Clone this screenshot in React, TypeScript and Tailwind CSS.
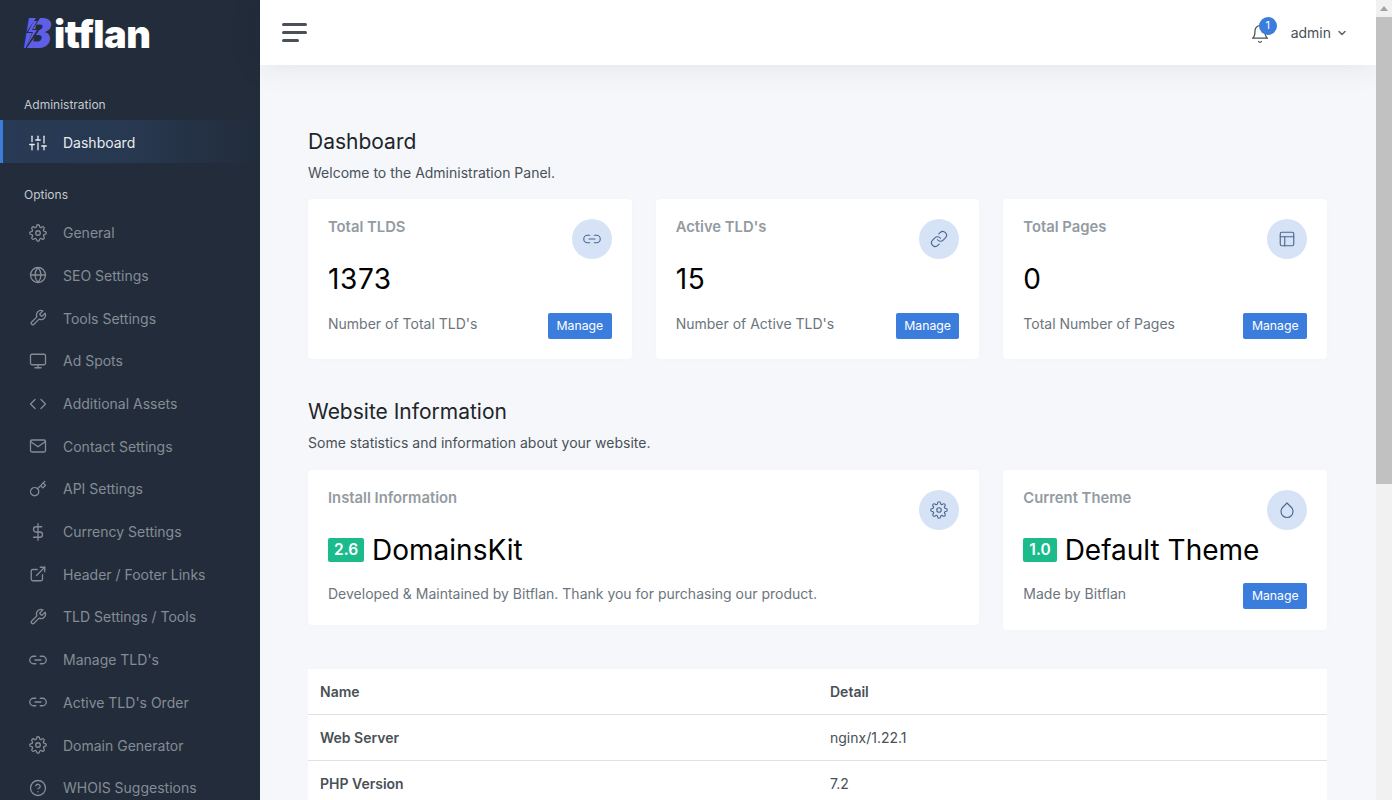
import {
  FiBell,
  FiChevronDown,
  FiCode,
  FiDollarSign,
  FiDroplet,
  FiExternalLink,
  FiGlobe,
  FiHelpCircle,
  FiKey,
  FiLayout,
  FiLink,
  FiLink2,
  FiMail,
  FiMonitor,
  FiSettings,
  FiSliders,
  FiTool,
} from "react-icons/fi";
import type { IconType } from "react-icons";
import type { ReactNode } from "react";

const options: { label: string; icon: IconType }[] = [
  { label: "General", icon: FiSettings },
  { label: "SEO Settings", icon: FiGlobe },
  { label: "Tools Settings", icon: FiTool },
  { label: "Ad Spots", icon: FiMonitor },
  { label: "Additional Assets", icon: FiCode },
  { label: "Contact Settings", icon: FiMail },
  { label: "API Settings", icon: FiKey },
  { label: "Currency Settings", icon: FiDollarSign },
  { label: "Header / Footer Links", icon: FiExternalLink },
  { label: "TLD Settings / Tools", icon: FiTool },
  { label: "Manage TLD's", icon: FiLink2 },
  { label: "Active TLD's Order", icon: FiLink2 },
  { label: "Domain Generator", icon: FiSettings },
  { label: "WHOIS Suggestions", icon: FiHelpCircle },
];

const rows = [
  ["Web Server", "nginx/1.22.1"],
  ["PHP Version", "7.2"],
];

function Sidebar() {
  return (
    <aside className="w-[260px] shrink-0 overflow-hidden bg-[#222c3b]">
      <div className="flex h-[69px] items-baseline pl-[24px] pt-[7px] text-[38px] leading-[52px] font-black tracking-[-0.5px] text-white">
        <span className="relative mr-[3px] text-[41px] italic text-[#5f5ee6]">
          B
          <svg viewBox="0 0 20 34" className="absolute left-[-1px] top-[11px] h-[34px] w-[20px]">
            <path d="M13 0 L3 15 L9 15 L1 34 L17 11 L10 11 L17 0 Z" fill="#222c3b" />
            <path d="M11 3 L5 14 L10 14 L3 29 L14 12 L9 12 L14 3 Z" fill="#5f5ee6" />
          </svg>
        </span>
        <span>itflan</span>
      </div>
      <div className="pl-[24px] pt-[27px] pb-[6px] text-[12px] leading-[18px] text-[#c3c9d0]">
        Administration
      </div>
      <div className="flex h-[43px] items-center gap-[16px] border-l-[3px] border-[#3b7ddd] bg-gradient-to-r from-[#283a55] via-[#273850] to-[#222c3b] pl-[26px] pt-[2px] text-[14px] text-[#e9ecef]">
        <FiSliders size={18} strokeWidth={1.75} />
        Dashboard
      </div>
      <div className="pl-[24px] pt-[23px] pb-[7.45px] text-[12px] leading-[18px] text-[#c3c9d0]">
        Options
      </div>
      <ul>
        {options.map((o) => (
          <li
            key={o.label}
            className="flex h-[42.7px] items-center gap-[16px] pl-[29px] text-[14px] text-[#858c95]"
          >
            <o.icon size={18} strokeWidth={1.75} className="shrink-0" />
            {o.label}
          </li>
        ))}
      </ul>
    </aside>
  );
}

function Topbar() {
  return (
    <header className="flex h-[65px] shrink-0 items-center justify-between bg-white pl-[22px] pr-[28px] shadow-[0_0_32px_rgba(33,37,41,0.1)]">
      <div className="flex w-[25px] flex-col gap-[5px]">
        <span className="h-[3px] w-full rounded-sm bg-[#495057]" />
        <span className="h-[3px] w-full rounded-sm bg-[#495057]" />
        <span className="h-[3px] w-[17px] rounded-sm bg-[#495057]" />
      </div>
      <div className="flex items-center gap-[21px]">
        <div className="relative mt-[2px]">
          <FiBell size={20} strokeWidth={1.5} className="text-[#495057]" />
          <span className="absolute left-[9px] top-[-7px] flex h-[18px] w-[18px] items-center justify-center rounded-full bg-[#3b7ddd] text-[11px] text-white">
            1
          </span>
        </div>
        <div className="flex items-center gap-[5px] text-[14px] text-[#495057]">
          admin
          <FiChevronDown size={12} strokeWidth={3} className="text-[#5c646c]" />
        </div>
      </div>
    </header>
  );
}

function IconBadge({ icon: Icon }: { icon: IconType }) {
  return (
    <div className="flex h-[40px] w-[40px] items-center justify-center rounded-full bg-[#d6e3f6] text-[#4d6590]">
      <Icon size={18} strokeWidth={1.5} />
    </div>
  );
}

function ManageButton() {
  return (
    <button
      type="button"
      className="h-[26px] w-[63.5px] rounded-[2px] bg-[#3b7ddd] text-[12.25px] leading-none text-white"
    >
      Manage
    </button>
  );
}

function Card({
  title,
  icon,
  value,
  note,
  manage = true,
  className = "",
}: {
  title: string;
  icon: IconType;
  value: ReactNode;
  note: string;
  manage?: boolean;
  className?: string;
}) {
  return (
    <div className={`rounded-[4px] bg-white px-[20px] pt-[20px] shadow-[0_0_8px_rgba(33,37,41,0.015)] ${className}`}>
      <div className="flex items-start justify-between">
        <div className="text-[14.8px] leading-[16px] font-semibold text-[#939ba2]">{title}</div>
        <IconBadge icon={icon} />
      </div>
      <div className="-mt-[1px] text-[28px] leading-[42px] text-[#000]">{value}</div>
      <div className="mt-[13px] flex items-start justify-between">
        <span className="pt-[1px] text-[14px] leading-[20px] text-[#6c757d]">{note}</span>
        {manage && <ManageButton />}
      </div>
    </div>
  );
}

function Count({ n }: { n: string }) {
  return <span className="tracking-[0.6px]">{n}</span>;
}

function Version({ v, name }: { v: string; name: string }) {
  return (
    <span className="flex h-[41px] items-center gap-[8px]">
      <span className="flex h-[24px] items-center justify-center rounded-[2px] bg-[#1cbb8c] px-[6px] text-[15.5px] font-semibold text-white">
        {v}
      </span>
      {name}
    </span>
  );
}

function Heading({ title, sub }: { title: string; sub: string }) {
  return (
    <div>
      <h1 className="text-[21px] leading-[30px] text-[#212529]">{title}</h1>
      <p className="mt-[5px] text-[14px] leading-[21px] text-[#495057]">{sub}</p>
    </div>
  );
}

function Scrollbar() {
  return (
    <div className="flex w-[16px] shrink-0 flex-col bg-[#f1f1f1]">
      <div className="flex h-[17px] items-center justify-center">
        <svg viewBox="0 0 8 5" className="h-[5px] w-[8px]">
          <path d="M4 0 L8 5 L0 5 Z" fill="#a3a3a3" />
        </svg>
      </div>
      <div className="h-[467px] bg-[#c1c1c1]" />
    </div>
  );
}

export default function App() {
  return (
    <div className="flex h-screen overflow-hidden bg-[#f5f7fb] font-['Inter',sans-serif]">
      <Sidebar />
      <main className="flex min-w-0 flex-1 flex-col">
        <Topbar />
        <div className="flex flex-col pl-[48px] pr-[49px] pt-[62px]">
          <Heading title="Dashboard" sub="Welcome to the Administration Panel." />
          <div className="mt-[16px] grid grid-cols-3 gap-[24px]">
            <Card title="Total TLDS" icon={FiLink2} value={<Count n="1373" />} note="Number of Total TLD's" className="h-[160px]" />
            <Card title="Active TLD's" icon={FiLink} value={<Count n="15" />} note="Number of Active TLD's" className="h-[160px]" />
            <Card title="Total Pages" icon={FiLayout} value={<Count n="0" />} note="Total Number of Pages" className="h-[160px]" />
          </div>
          <div className="mt-[38px]">
            <Heading title="Website Information" sub="Some statistics and information about your website." />
          </div>
          <div className="mt-[17px] grid grid-cols-3 items-start gap-[24px]">
            <Card
              title="Install Information"
              icon={FiSettings}
              value={<Version v="2.6" name="DomainsKit" />}
              note="Developed & Maintained by Bitflan. Thank you for purchasing our product."
              manage={false}
              className="col-span-2 h-[155px]"
            />
            <Card
              title="Current Theme"
              icon={FiDroplet}
              value={<Version v="1.0" name="Default Theme" />}
              note="Made by Bitflan"
              className="h-[160px]"
            />
          </div>
          <table className="mt-[39px] w-full border-collapse bg-white text-[14px] text-[#495057]">
            <thead>
              <tr className="h-[45px] border-b border-[#dee2e6] text-left">
                <th className="w-[522px] pl-[12px] font-semibold">Name</th>
                <th className="font-semibold">Detail</th>
              </tr>
            </thead>
            <tbody>
              {rows.map(([name, detail]) => (
                <tr key={name} className="h-[46px] border-b border-[#dee2e6]">
                  <td className="pl-[12px] font-semibold">{name}</td>
                  <td>{detail}</td>
                </tr>
              ))}
            </tbody>
          </table>
        </div>
      </main>
      <Scrollbar />
    </div>
  );
}
